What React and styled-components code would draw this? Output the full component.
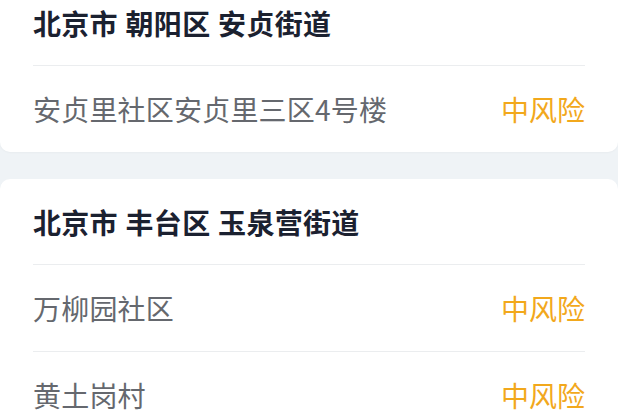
import styled, { createGlobalStyle } from 'styled-components';

const GlobalStyle = createGlobalStyle`
	html, body {
		margin: 0;
		padding: 0;
		background: #eff3f6;
		font-family: "Noto Sans CJK SC", "Noto Sans", sans-serif;
	}
	body {
		overflow: hidden;
	}
`;

const PageWrapper = styled.div`
	width: 618px;
	margin-top: -20px;
	display: flex;
	flex-direction: column;
	gap: 27px;
`;

const Card = styled.section`
	background: #ffffff;
	border-radius: 10px;
	padding: 0 33px;
	box-shadow: 0 1px 2px rgba(0, 0, 0, 0.03);
`;

const CardHeader = styled.h2`
	margin: 0;
	height: 85px;
	display: flex;
	align-items: center;
	font-size: 28px;
	font-weight: 700;
	color: #1b2130;
	letter-spacing: 0.3px;
	word-spacing: 1px;
`;

const Row = styled.div`
	height: 86px;
	display: flex;
	align-items: center;
	justify-content: space-between;
	border-top: 1px solid #ebedef;
	font-size: 28px;
	letter-spacing: 0.2px;
`;

const PlaceName = styled.span`
	color: #65686e;
`;

const RiskLevel = styled.span`
	color: ${p => (p.$level === 'high' ? '#e5483b' : '#f2a81c')};
	letter-spacing: 0;
`;

const areas = [
	{
		title: '北京市 朝阳区 安贞街道',
		places: [{ name: '安贞里社区安贞里三区4号楼', level: 'mid' }],
	},
	{
		title: '北京市 丰台区 玉泉营街道',
		places: [
			{ name: '万柳园社区', level: 'mid' },
			{ name: '黄土岗村', level: 'mid' },
		],
	},
];

const App = () => {
	return (
		<>
			<GlobalStyle />
			<PageWrapper>
				{areas.map(area => (
					<Card key={area.title}>
						<CardHeader>{area.title}</CardHeader>
						{area.places.map(place => (
							<Row key={place.name}>
								<PlaceName>{place.name}</PlaceName>
								<RiskLevel $level={place.level}>
									{place.level === 'high' ? '高风险' : '中风险'}
								</RiskLevel>
							</Row>
						))}
					</Card>
				))}
			</PageWrapper>
		</>
	);
};

export default App;
